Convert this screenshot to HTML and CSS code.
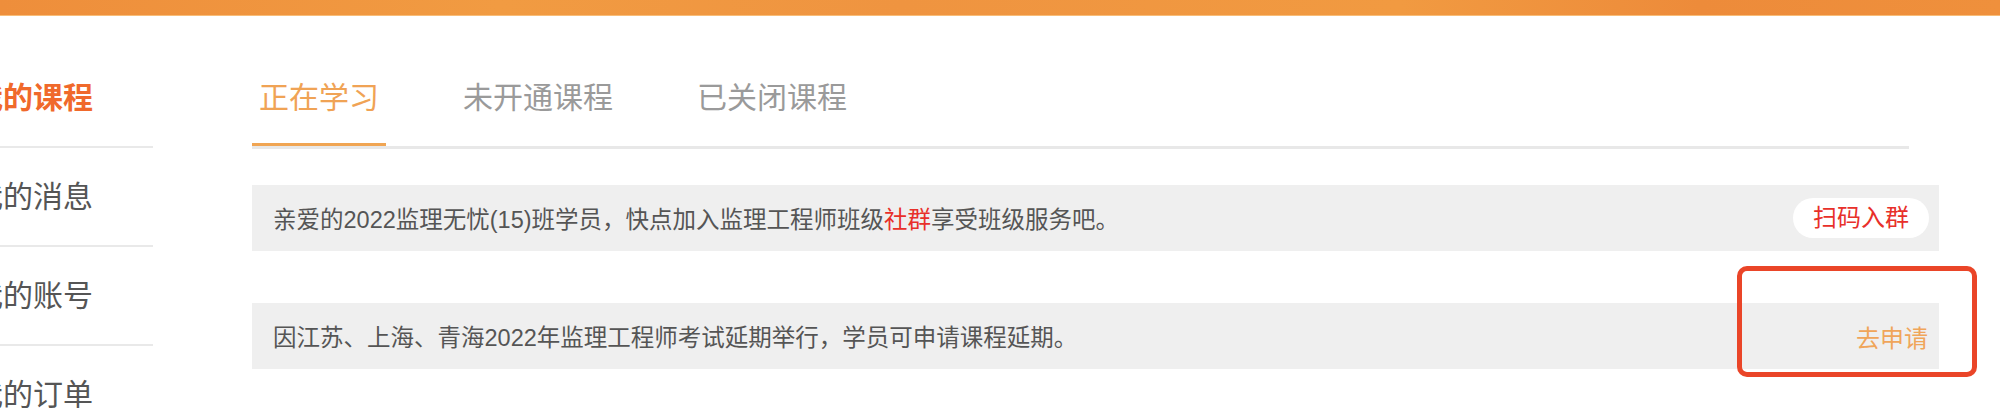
FILE: index.html
```html
<!DOCTYPE html>
<html lang="zh-CN">
<head>
    <meta charset="UTF-8">
    <meta name="viewport" content="width=device-width, initial-scale=1.0">
    <title>我的课程</title>
    <link rel="stylesheet" href="styles.css">
</head>
<body>
    <div class="topbar"></div>
    <div class="page">
        <ul class="sidebar">
            <li class="active"><a href="#">我的课程</a></li>
            <li><a href="#">我的消息</a></li>
            <li><a href="#">我的账号</a></li>
            <li><a href="#">我的订单</a></li>
        </ul>

        <div class="main">
            <div class="tabs">
                <span class="tab active">正在学习</span>
                <span class="tab">未开通课程</span>
                <span class="tab">已关闭课程</span>
            </div>

            <div class="notice">
                <p>亲爱的2022监理无忧(15)班学员，快点加入监理工程师班级<span class="red">社群</span>享受班级服务吧。</p>
                <a class="btn-qun" href="#">扫码入群</a>
            </div>

            <div class="notice second">
                <p>因江苏、上海、青海2022年监理工程师考试延期举行，学员可申请课程延期。</p>
                <a class="apply" href="#">去申请</a>
                <div class="mark"></div>
            </div>
        </div>
    </div>
</body>
</html>
```

FILE: styles.css
```css
body {
    margin: 0;
    background: #fff;
    font-family: "Liberation Sans", "Noto Sans CJK SC", sans-serif;
    color: #555;
}
a {
    text-decoration: none;
}
.topbar {
    height: 15px;
    background: linear-gradient(90deg, #ee8e3b, #f19b42 25%, #ef9440 45%, #f19a41 70%, #ed8b3a 85%, #ef903c);
    border-bottom: 1px solid #f8bd78;
}
.page {
    display: flex;
    margin-left: -47px;
    padding-top: 33px;
}
.sidebar {
    list-style: none;
    margin: 0;
    padding: 0;
    width: 200px;
    flex: none;
}
.sidebar li {
    height: 97px;
    line-height: 97px;
    border-bottom: 2px solid #e9e9e9;
    padding-left: 20px;
    font-size: 30px;
}
.sidebar li a {
    color: #555;
}
.sidebar li.active a {
    color: #f0692b;
    font-weight: bold;
}
.main {
    flex: 1;
    margin-left: 99px;
    margin-right: 91px;
}
.tabs {
    display: flex;
    gap: 70px;
    height: 97px;
    border-bottom: 3px solid #e8e8e8;
}
.tab {
    padding: 0 7px;
    font-size: 30px;
    line-height: 97px;
    color: #9a9a9a;
}
.tab.active {
    color: #f0a355;
    border-bottom: 3px solid #f0a553;
}
.notice {
    display: flex;
    align-items: center;
    justify-content: space-between;
    height: 66px;
    margin-top: 36px;
    margin-right: -30px;
    padding: 0 10px 0 21px;
    background: #efefef;
    font-size: 24px;
}
.notice p {
    margin: 0;
    font-size: 23.5px;
}
.notice .red {
    color: #e8302a;
}
.notice.second {
    position: relative;
    margin-top: 52px;
    padding-right: 11px;
}
.btn-qun {
    width: 136px;
    height: 40px;
    line-height: 40px;
    border-radius: 20px;
    background: #fff;
    color: #e8302a;
    text-align: center;
}
.apply {
    color: #f0a55a;
}
.mark {
    position: absolute;
    top: -37px;
    right: -38px;
    width: 240px;
    height: 111px;
    box-sizing: border-box;
    border: 5px solid #ea4528;
    border-radius: 10px;
}
```
